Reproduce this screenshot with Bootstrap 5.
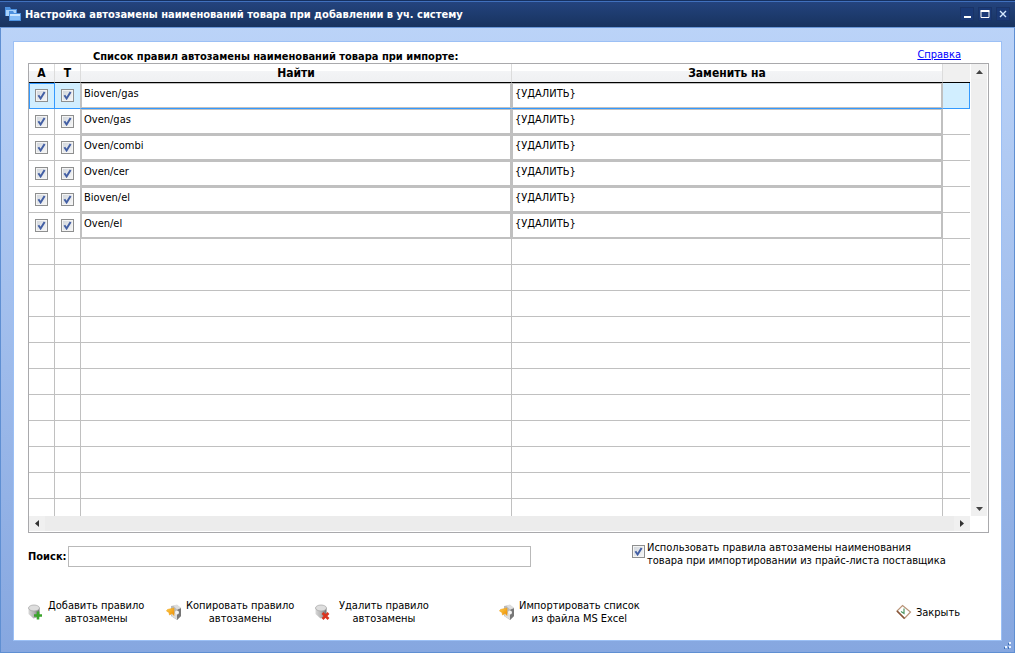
<!DOCTYPE html>
<html lang="ru">
<head>
<meta charset="utf-8">
<meta name="viewport" content="width=device-width, initial-scale=1">
<title>Настройка автозамены</title>
<link href="https://cdn.jsdelivr.net/npm/bootstrap@5.3.0/dist/css/bootstrap.min.css" rel="stylesheet">
<style>
body{font-family:"DejaVu Sans Condensed","DejaVu Sans",sans-serif;font-size:11px;line-height:13px;color:#000}
button,input{font:inherit;color:inherit}
.app-window{height:100vh;min-height:420px;border:1px solid #5f8fd2;border-top:0;background:linear-gradient(#bdd5f9,#86a7e0)}
.titlebar{height:28px;margin:0 -1px;padding:0 5px;background:linear-gradient(#24447f,#18335f);border-top:1px solid #16305f;border-bottom:1px solid #6b98d9;box-shadow:inset 0 1px #4070bd}
.titlebar h1{font-size:11px;line-height:13px}
.win-btn{width:14px;height:14px;background:#1b3a77;border:1px solid #1a3468}
.panel{margin:13px 12px 11px;border:1px solid #9cc0f5;padding:6px 12px 15px 14px}
.help-link{color:#00f;margin-right:28px}
.list-title{margin:0 0 0 65px;padding-top:2px;font-size:11px;line-height:13px}
.grid-box{border:1px solid #a9a9ac;min-height:0;flex-basis:0}
.rules-area{flex-basis:0}
.rules{table-layout:fixed;border-collapse:separate;border-spacing:0;width:100%}
.rules .c-flag{width:26px}.rules .c-end{width:27px}
.rules th{height:19px;text-align:center;padding:0;font-size:12px;line-height:17px;border-bottom:1px solid #000;border-right:1px solid #dcdcdc;background:linear-gradient(#fff 40%,#f3f4f6 40%,#eff0f2)}
.rules th:last-child{background:#f0f0f0;border-right:0}
.rules td{height:26px;padding:0;border-right:1px solid #c0c0c0;border-bottom:1px solid #c0c0c0;vertical-align:top}
.rules td:last-child{border-right:0}
.rules td input[type=text]{display:block;width:100%;height:25px;border:1px solid #c0c0c0;border-radius:0;padding:0 2px 5px;background:#fff;outline:0}
.rules .picked td{background:#d1eeff;border-bottom-color:#39f}
.rules .picked td:first-child{box-shadow:inset 1px 1px #39f;border-right-color:#39f}
.rules .picked td:last-child{border-right:1px solid #39f}
.tick{appearance:none;display:block;flex:none;width:13px;height:13px;margin:0;border:1px solid #8e8f8f;background:linear-gradient(135deg,#cfd4da,#f8f8f8);box-shadow:inset 0 0 0 1px #f4f4f4}
.tick:checked{background-image:url("data:image/svg+xml,%3Csvg xmlns='http://www.w3.org/2000/svg' viewBox='0 0 11 11'%3E%3Cpath d='M2.4 5.2l2.2 3.3L8.6 2' fill='none' stroke='%23435fa4' stroke-width='2'/%3E%3C/svg%3E"),linear-gradient(135deg,#cfd4da,#f8f8f8)}
.rules .tick{margin:6px auto 0}
.vbar{width:18px;background:#eee;border-left:1px solid #fff;border-right:1px solid #fff}
.hbar{height:16px;background:#ececec;margin-right:18px;border-bottom:1px solid #fff}
.arrow-btn{display:flex;align-items:center;justify-content:center;width:16px;height:15px;border:0;padding:0;background:#f0f0f0}
.search-label{width:40px}
.search-box{height:21px;border:1px solid #b9b9b9;border-radius:0;padding:0 3px}
.bottom-row{display:grid;grid-template-columns:503px 1fr;column-gap:101px;margin-top:8px}
.use-label{margin-left:2px}
.actions{display:grid;grid-template-columns:138px 149px 184px 1fr auto;margin-top:32px;padding-right:29px}
.act{background:none;border:0;padding:0;justify-self:start}
.grip{right:2px;bottom:2px}
</style>
</head>
<body>
<svg width="0" height="0" class="position-absolute" aria-hidden="true">
<defs>
<linearGradient id="metal"><stop stop-color="#d8d8d8"/><stop offset=".5" stop-color="#b4b4b4"/><stop offset="1" stop-color="#6c6c6c"/></linearGradient>
<linearGradient id="gold" x2="1" y2="1"><stop stop-color="#ffd04a"/><stop offset="1" stop-color="#ec8a00"/></linearGradient>
<symbol id="cyl" viewBox="0 0 16 16"><path d="M.5 4v6l5 4.500 6-2V4z" fill="url(#metal)"/><ellipse cx="6" cy="4" rx="5.500" ry="3" fill="#dedede" stroke="#a6a6a6" stroke-width=".7"/></symbol>
<symbol id="import" viewBox="0 0 16 16"><path d="M5 2l6-1 4 3v8l-4 4-6-4z" fill="#b9b9b9"/><path d="M11 6l4-2v8l-4 4z" fill="#777"/><path d="M7 1.500L11 .5l4 3.500-4 1.500z" fill="#ddd"/><path d="M5 9l6 1v5.500l-5-3z" fill="#ddd"/><circle cx="11" cy="8.500" r="2" fill="#f4f4f4"/><path d="M1.500 5.500L8 4v7.500L6 9.500 3.500 11 3 8.500.5 7z" fill="url(#gold)" stroke="#f0a21c" stroke-width=".6"/></symbol>
</defs>
</svg>
<div class="app-window d-flex flex-column position-relative">
<header class="titlebar d-flex align-items-center text-white flex-shrink-0">
<svg width="16" height="16" viewBox="0 0 16 16" class="me-1"><path d="M0 1h5l1 2h6v7H0z" fill="#4d91df"/><path d="M1 4h10v6H1z" fill="#a9d2fb"/><path d="M4 5h4l1 2h7v8H4z" fill="#4d91df"/><path d="M5 8h10v6H5z" fill="#86bdf7"/><path d="M5 8h10v2H5z" fill="#c9e5ff"/></svg>
<h1 class="fw-bold m-0 flex-grow-1">Настройка автозамены наименований товара при добавлении в уч. систему</h1>
<div class="d-flex gap-1">
<button class="win-btn d-flex p-0" aria-label="Свернуть"><svg width="12" height="12"><path d="M3 9h7" stroke="#fff" stroke-width="2"/></svg></button>
<button class="win-btn d-flex p-0" aria-label="Развернуть"><svg width="12" height="12"><path d="M2 3.500h8v6H2z" fill="none" stroke="#fff"/><path d="M1.500 3h9" stroke="#fff" stroke-width="2"/></svg></button>
<button class="win-btn d-flex p-0" aria-label="Закрыть окно"><svg width="12" height="12"><path d="M3 3l6 6M9 3l-6 6" stroke="#d5eaff" stroke-width="1.400"/></svg></button>
</div>
</header>
<main class="panel bg-white d-flex flex-column flex-grow-1">
<div class="d-flex justify-content-between">
<h2 class="list-title fw-bold">Список правил автозамены наименований товара при импорте:</h2>
<a class="help-link" href="#">Справка</a>
</div>
<div class="grid-box d-flex flex-column flex-grow-1">
<div class="rules-area d-flex flex-grow-1 overflow-hidden">
<div class="flex-grow-1 overflow-hidden">
<table class="rules">
<colgroup><col class="c-flag"><col class="c-flag"><col><col><col class="c-end"></colgroup>
<thead><tr><th>А</th><th>Т</th><th>Найти</th><th>Заменить на</th><th></th></tr></thead>
<tbody id="ruleRows"></tbody>
</table>
</div>
<div class="vbar d-flex flex-column justify-content-between flex-shrink-0">
<button class="arrow-btn" aria-label="Вверх"><svg width="7" height="4"><path d="M0 4l3.500-4L7 4z" fill="#444"/></svg></button>
<button class="arrow-btn" aria-label="Вниз"><svg width="7" height="4"><path d="M0 0l3.500 4L7 0z" fill="#444"/></svg></button>
</div>
</div>
<div class="hbar d-flex justify-content-between flex-shrink-0">
<button class="arrow-btn" aria-label="Влево"><svg width="4" height="7"><path d="M4 0L0 3.500 4 7z" fill="#333"/></svg></button>
<button class="arrow-btn" aria-label="Вправо"><svg width="4" height="7"><path d="M0 0l4 3.500L0 7z" fill="#333"/></svg></button>
</div>
</div>
<div class="bottom-row">
<div class="d-flex align-items-center pt-1">
<label for="search" class="search-label fw-bold text-nowrap">Поиск:</label>
<input id="search" type="text" class="search-box flex-grow-1">
</div>
<div class="d-flex">
<input type="checkbox" class="tick mt-1" id="useRules" checked>
<label for="useRules" class="use-label text-nowrap">Использовать правила автозамены наименования<br>товара при импортировании из прайс-листа поставщика</label>
</div>
</div>
<div class="actions">
<button class="act d-flex align-items-center gap-1"><svg class="flex-shrink-0" width="16" height="16" viewBox="0 0 16 16"><use href="#cyl"/><path d="M10 7.500v8M6 11.500h8" stroke="#3ba52c" stroke-width="2.600"/></svg><span>Добавить правило<br>автозамены</span></button>
<button class="act d-flex align-items-center gap-1"><svg class="flex-shrink-0" width="16" height="16"><use href="#import"/></svg><span>Копировать правило<br>автозамены</span></button>
<button class="act d-flex align-items-center gap-2"><svg class="flex-shrink-0" width="16" height="16" viewBox="0 0 16 16"><use href="#cyl"/><path d="M7.500 9l6 6M13.500 9l-6 6" stroke="#d9341f" stroke-width="2.600"/></svg><span>Удалить правило<br>автозамены</span></button>
<button class="act d-flex align-items-center gap-1"><svg class="flex-shrink-0" width="16" height="16"><use href="#import"/></svg><span>Импортировать список<br>из файла MS Excel</span></button>
<button class="act d-flex align-items-center gap-1"><svg class="flex-shrink-0" width="16" height="16" viewBox="0 0 16 16"><path d="M6.500 1.500l8 6.500-6 6.500L1 7z" fill="#fff" stroke="#b99478" stroke-width="1.200"/><path d="M1 7l7.500 7.500" stroke="#87563a" stroke-width="1.600"/><path d="M5 7.500l3 2V4.500" fill="none" stroke="#4c9560" stroke-width="1.200"/></svg><span>Закрыть</span></button>
</div>
</main>
<svg class="grip position-absolute" width="8" height="8"><path d="M5 0h2v2H5zM5 4h2v2H5zM1 4h2v2H1z" fill="#e8f2ff"/><path d="M4 1h1v2H4zM0 5h1v2H0zM4 5h1v2H4z" fill="#3f70b5"/></svg>
</div>
<script>
const rules=['Bioven/gas','Oven/gas','Oven/combi','Oven/cer','Bioven/el','Oven/el'];
const filled=rules.map((r,i)=>`<tr class="${i?'':'picked'}"><td><input type="checkbox" class="tick" aria-label="А" checked></td><td><input type="checkbox" class="tick" aria-label="Т" checked></td><td><input type="text" aria-label="Найти" value="${r}"></td><td><input type="text" aria-label="Заменить на" value="{УДАЛИТЬ}"></td><td></td></tr>`);
const blank='<tr><td></td><td></td><td></td><td></td><td></td></tr>'.repeat(11);
document.getElementById('ruleRows').innerHTML=filled.join('')+blank;
</script>
<script src="https://cdn.jsdelivr.net/npm/bootstrap@5.3.0/dist/js/bootstrap.bundle.min.js"></script>
</body>
</html>
